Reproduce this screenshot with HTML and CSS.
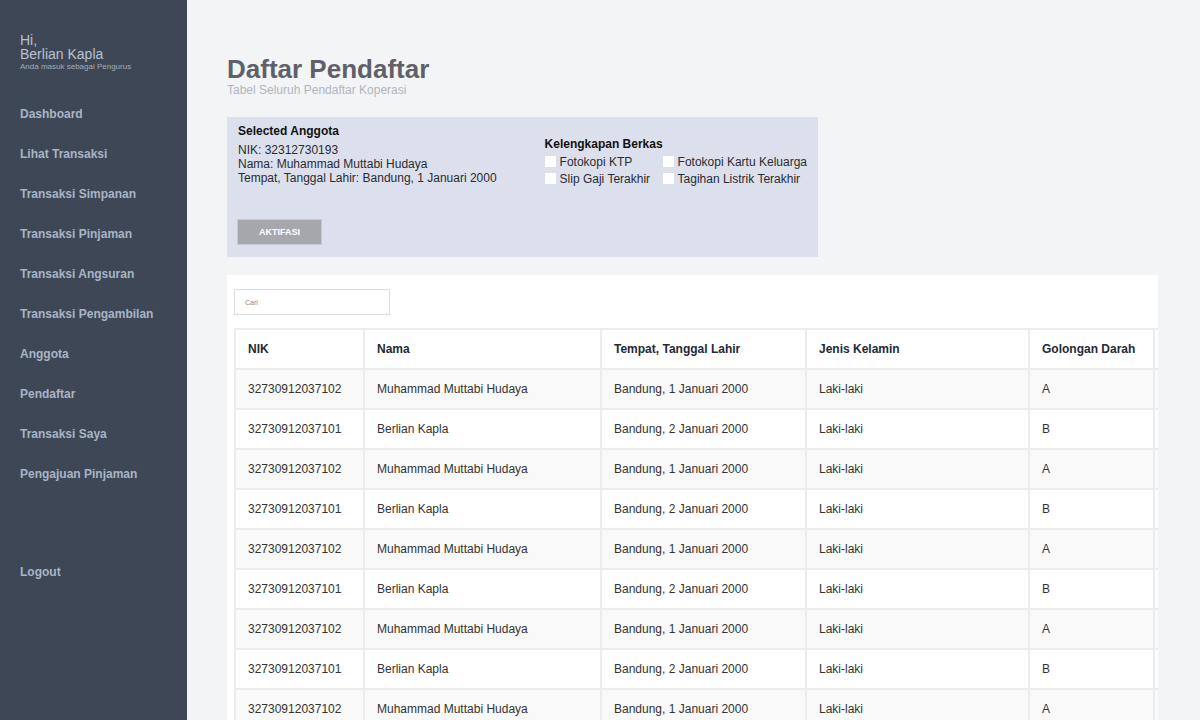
FILE: index.html
```html
<!DOCTYPE html>
<html lang="id">
<head>
<meta charset="utf-8">
<title>Daftar Pendaftar</title>
<link rel="stylesheet" href="styles.css">
</head>
<body>
<div class="app">
  <aside class="sidebar">
    <div class="greet">
      <div class="hi">Hi,</div>
      <div class="name">Berlian Kapla</div>
      <div class="role">Anda masuk sebagai Pengurus</div>
    </div>
    <nav class="nav">
      <a class="nav-item">Dashboard</a>
      <a class="nav-item">Lihat Transaksi</a>
      <a class="nav-item">Transaksi Simpanan</a>
      <a class="nav-item">Transaksi Pinjaman</a>
      <a class="nav-item">Transaksi Angsuran</a>
      <a class="nav-item">Transaksi Pengambilan</a>
      <a class="nav-item">Anggota</a>
      <a class="nav-item">Pendaftar</a>
      <a class="nav-item">Transaksi Saya</a>
      <a class="nav-item">Pengajuan Pinjaman</a>
    </nav>
    <a class="nav-item logout">Logout</a>
  </aside>
  <main class="main">
    <h1 class="title">Daftar Pendaftar</h1>
    <div class="subtitle">Tabel Seluruh Pendaftar Koperasi</div>

    <section class="card">
      <div class="card-left">
        <div class="card-head">Selected Anggota</div>
        <div class="line">NIK: 32312730193</div>
        <div class="line">Nama: Muhammad Muttabi Hudaya</div>
        <div class="line">Tempat, Tanggal Lahir: Bandung, 1 Januari 2000</div>
        <button class="btn">AKTIFASI</button>
      </div>
      <div class="card-right">
        <div class="card-head">Kelengkapan Berkas</div>
        <div class="checks">
          <label class="check"><span class="box"></span>Fotokopi KTP</label>
          <label class="check"><span class="box"></span>Fotokopi Kartu Keluarga</label>
          <label class="check"><span class="box"></span>Slip Gaji Terakhir</label>
          <label class="check"><span class="box"></span>Tagihan Listrik Terakhir</label>
        </div>
      </div>
    </section>

    <section class="table-wrap">
      <div class="search"><span class="placeholder">Cari</span></div>
      <table class="table">
        <colgroup>
          <col class="c1"><col class="c2"><col class="c3"><col class="c4"><col class="c5"><col class="c6">
        </colgroup>
        <thead>
          <tr><th>NIK</th><th>Nama</th><th>Tempat, Tanggal Lahir</th><th>Jenis Kelamin</th><th>Golongan Darah</th><th></th></tr>
        </thead>
        <tbody>
          <tr><td>32730912037102</td><td>Muhammad Muttabi Hudaya</td><td>Bandung, 1 Januari 2000</td><td>Laki-laki</td><td>A</td><td></td></tr>
          <tr><td>32730912037101</td><td>Berlian Kapla</td><td>Bandung, 2 Januari 2000</td><td>Laki-laki</td><td>B</td><td></td></tr>
          <tr><td>32730912037102</td><td>Muhammad Muttabi Hudaya</td><td>Bandung, 1 Januari 2000</td><td>Laki-laki</td><td>A</td><td></td></tr>
          <tr><td>32730912037101</td><td>Berlian Kapla</td><td>Bandung, 2 Januari 2000</td><td>Laki-laki</td><td>B</td><td></td></tr>
          <tr><td>32730912037102</td><td>Muhammad Muttabi Hudaya</td><td>Bandung, 1 Januari 2000</td><td>Laki-laki</td><td>A</td><td></td></tr>
          <tr><td>32730912037101</td><td>Berlian Kapla</td><td>Bandung, 2 Januari 2000</td><td>Laki-laki</td><td>B</td><td></td></tr>
          <tr><td>32730912037102</td><td>Muhammad Muttabi Hudaya</td><td>Bandung, 1 Januari 2000</td><td>Laki-laki</td><td>A</td><td></td></tr>
          <tr><td>32730912037101</td><td>Berlian Kapla</td><td>Bandung, 2 Januari 2000</td><td>Laki-laki</td><td>B</td><td></td></tr>
          <tr><td>32730912037102</td><td>Muhammad Muttabi Hudaya</td><td>Bandung, 1 Januari 2000</td><td>Laki-laki</td><td>A</td><td></td></tr>
          <tr><td>32730912037101</td><td>Berlian Kapla</td><td>Bandung, 2 Januari 2000</td><td>Laki-laki</td><td>B</td><td></td></tr>
        </tbody>
      </table>
    </section>
  </main>
</div>
</body>
</html>
```

FILE: styles.css
```css
* { box-sizing: border-box; }
html, body {
  margin: 0;
  padding: 0;
  height: 100%;
  overflow: hidden;
}
body {
  font-family: "Liberation Sans", Arial, sans-serif;
  background: #f3f4f6;
}
.app {
  display: flex;
  height: 720px;
}
.sidebar {
  width: 187px;
  flex: 0 0 187px;
  background: #3d4756;
  padding: 33px 0 0 20px;
  display: flex;
  flex-direction: column;
}
.greet { color: #b9c2cf; }
.hi, .name { font-size: 14px; line-height: 14px; }
.role { font-size: 8px; line-height: 10px; color: #a3adbb; margin-top: 1px; }
.nav {
  margin-top: 22px;
  display: flex;
  flex-direction: column;
}
.nav-item {
  display: block;
  height: 40px;
  line-height: 40px;
  font-size: 12px;
  font-weight: bold;
  color: #a9b5c6;
  text-decoration: none;
}
.logout { margin-top: 58px; }

.main {
  flex: 1;
  min-width: 0;
  padding: 54px 42px 0 40px;
}
.title {
  margin: 0;
  font-size: 26px;
  line-height: 30px;
  font-weight: bold;
  color: #5f6069;
}
.subtitle {
  font-size: 12px;
  line-height: 14px;
  color: #b1b4bd;
  margin-top: -1px;
}
.card {
  margin-top: 20px;
  width: 591px;
  height: 140px;
  background: #dce0ec;
  padding: 7px 11px 0 11px;
  display: flex;
  font-size: 12px;
  color: #1e1f24;
}
.card-left { width: 308px; display: flex; flex-direction: column; align-items: flex-start; }
.card-head { font-weight: bold; line-height: 14px; color: #111; }
.card-left .card-head { margin-bottom: 5px; }
.line { line-height: 14px; color: #2a2b30; }
.btn {
  margin-top: 34px;
  margin-left: -1px;
  width: 85px;
  height: 26px;
  background: #a6a7ab;
  border: 1px solid #c2cbd8;
  color: #fff;
  font-family: "Liberation Sans", Arial, sans-serif;
  font-size: 9px;
  font-weight: bold;
  padding: 0;
}
.card-right { padding-top: 13px; padding-left: 1px; }
.checks {
  display: grid;
  grid-template-columns: 118px auto;
  margin-top: 2px;
}
.check {
  display: flex;
  align-items: center;
  height: 17px;
  color: #2a2b30;
  white-space: nowrap;
}
.box {
  width: 11px;
  height: 11px;
  background: #fff;
  margin-right: 4px;
  flex: 0 0 11px;
}
.table-wrap {
  margin-top: 18px;
  background: #fff;
  padding: 14px 0 0 7px;
  overflow: hidden;
  height: 460px;
}
.search {
  width: 156px;
  height: 26px;
  border: 1px solid #dddddd;
  background: #fff;
  padding-left: 10px;
  display: flex;
  align-items: center;
}
.placeholder { font-size: 7px; color: #8a8a8a; }
.table {
  margin-top: 13px;
  border-collapse: collapse;
  table-layout: fixed;
  width: 1050px;
  font-size: 12px;
}
.c1 { width: 129px; }
.c2 { width: 237px; }
.c3 { width: 205px; }
.c4 { width: 223px; }
.c5 { width: 125px; }
.c6 { width: 131px; }
.table th, .table td {
  border: 2px solid #ececec;
  height: 40px;
  padding: 0 0 0 12px;
  text-align: left;
  white-space: nowrap;
  overflow: hidden;
}
.table th {
  font-weight: bold;
  color: #222a38;
  background: #fff;
}
.table td { color: #333; }
.table tbody tr:nth-child(odd) td { background: #f9f9f9; }
.table tbody tr:nth-child(even) td { background: #fff; }
```
